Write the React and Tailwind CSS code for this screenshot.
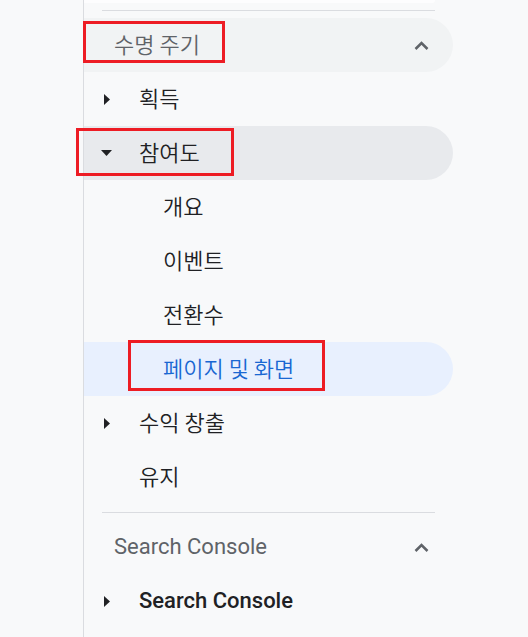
import React from "react";

const KR = { fontFamily: "'Noto Sans CJK KR', 'Noto Sans', sans-serif" };
const LATIN = { fontFamily: "Roboto, 'Noto Sans', sans-serif" };

function ArrowRight() {
  return (
    <svg width="6" height="11" viewBox="0 0 6 11" className="fill-[#202124]">
      <path d="M0 0 L6 5.5 L0 11 Z" />
    </svg>
  );
}

function ArrowDown() {
  return (
    <svg width="11" height="6" viewBox="0 0 11 6" className="fill-[#202124]">
      <path d="M0 0 L11 0 L5.5 6 Z" />
    </svg>
  );
}

function ChevronUp() {
  return (
    <svg width="15" height="9" viewBox="0 0 15 9" fill="none">
      <polyline points="1.5,8 7.5,2 13.5,8" stroke="#5f6368" strokeWidth="2.5" />
    </svg>
  );
}

function Mark({ className }) {
  return (
    <div
      className={`pointer-events-none absolute border-[3px] border-[#ed1c24] ${className}`}
    />
  );
}

function Item({ label, arrow, indent, active, selected, bold, latin }) {
  return (
    <div
      className={`flex h-[54px] w-[369px] items-center rounded-r-full ${
        active ? "bg-[#e8f0fe]" : selected ? "bg-[#e8eaed]" : ""
      }`}
    >
      <div className="flex w-[55px] shrink-0 items-center pl-[20px]">
        {arrow === "right" && <ArrowRight />}
        {arrow === "down" && (
          <span className="-ml-[3px]">
            <ArrowDown />
          </span>
        )}
      </div>
      <span
        className={`${indent ? "pl-[24px]" : ""} ${
          active ? "text-[#1967d2]" : "text-[#202124]"
        } ${bold ? "font-medium" : ""} ${
          latin ? "" : "-translate-y-[2px] font-[350]"
        } text-[22px] leading-none`}
        style={latin ? LATIN : KR}
      >
        {label}
      </span>
    </div>
  );
}

function Header({ label, latin, shaded }) {
  return (
    <div
      className={`flex h-[54px] w-[369px] items-center justify-between rounded-r-full pl-[30px] pr-[24px] ${
        shaded ? "bg-[#f1f3f4]" : ""
      }`}
    >
      <span
        className={`text-[22px] leading-none text-[#5f6368] ${
          latin ? "" : "-translate-y-[2px] font-[350]"
        }`}
        style={latin ? LATIN : KR}
      >
        {label}
      </span>
      <ChevronUp />
    </div>
  );
}

export default function App() {
  return (
    <div className="relative flex h-[637px] w-[528px] overflow-hidden bg-[#f8f9fa]">
      <div className="w-[83px] shrink-0" />
      <div className="flex flex-1 flex-col border-l border-[#dadce0]">
        {/* tail of previous card */}
        <div className="h-[3px] w-[351px] rounded-br-[10px] bg-[#fdfdfe]" />
        <div className="mx-[18px] mt-[7px] h-px w-[333px] bg-[#dadce0]" />
        <div className="mt-[7px]">
          <Header label="수명 주기" shaded />
          <Item label="획득" arrow="right" />
          <Item label="참여도" arrow="down" selected />
          <Item label="개요" indent />
          <Item label="이벤트" indent />
          <Item label="전환수" indent />
          <Item label="페이지 및 화면" indent active />
          <Item label="수익 창출" arrow="right" />
          <Item label="유지" />
        </div>
        <div className="mx-[18px] mt-[8px] h-px w-[333px] bg-[#dadce0]" />
        <div className="mt-[7px]">
          <Header label="Search Console" latin />
          <Item label="Search Console" arrow="right" bold latin />
        </div>
      </div>

      {/* annotation boxes */}
      <Mark className="left-[83px] top-[21px] h-[42px] w-[142px]" />
      <Mark className="left-[76px] top-[128px] h-[48px] w-[158px]" />
      <Mark className="left-[128px] top-[340px] h-[51px] w-[197px]" />
    </div>
  );
}
